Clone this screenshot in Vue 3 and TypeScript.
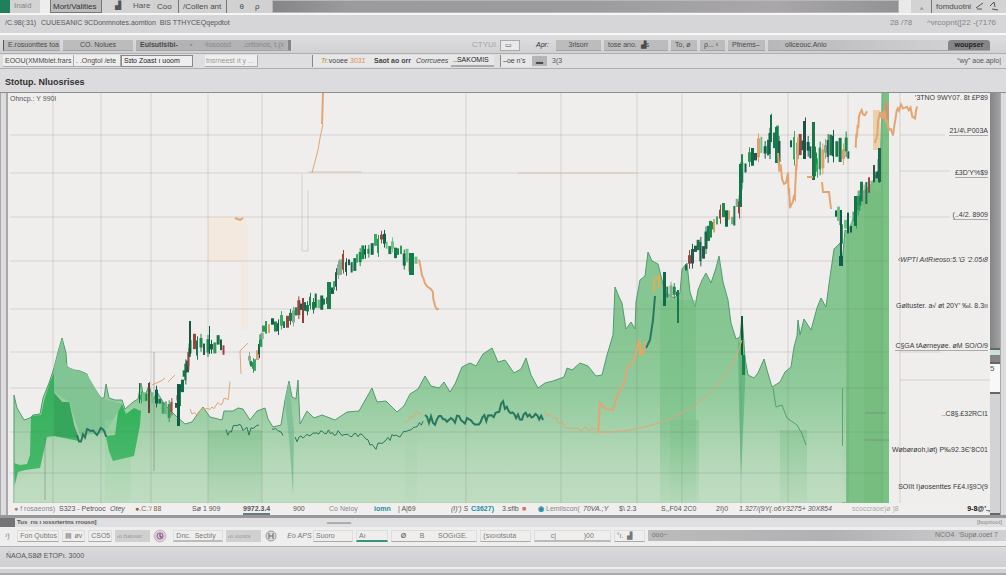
<script setup lang="ts">
type Point = [number, number]
interface Candle { x: number; y: number; h: number; w: number; fill: string }

const xLabels: { text: string; tone?: string }[] = [
  { text: '● f rosaeons)', tone: 'soft' }, { text: 'S323 - Petrooc' }, { text: 'Otey', tone: 'slant' },
  { text: '●.C.’/ 88', tone: 'warm' }, { text: 'Sø 1 909' }, { text: '9972.3.4', tone: 'marked' },
  { text: '900' }, { text: 'Co Neioy', tone: 'soft' }, { text: 'iomn', tone: 'teal' }, { text: '| A|69' },
  { text: '(I)’) S', tone: 'slant' }, { text: 'C3627)', tone: 'teal' }, { text: '3.sflb' }, { text: '■', tone: 'red' },
  { text: '◉', tone: 'teal' }, { text: 'Lemiiscon(', tone: 'soft' }, { text: '70VA.;Y', tone: 'slant' }, { text: '$\\ 2.3' },
  { text: 'S,,F04 2C0' }, { text: '2I)0' }, { text: '1.327/(9Y(.o6Y3275+ 30X854', tone: 'slant' },
  { text: 'scoccraoe)ø )8', tone: 'faint' }, { text: '9-8@’.,', tone: 'bold' },
]

const yLabels: { text: string; tone?: string }[] = [
  { text: '’3TNO 9WY07. 8t £P89' }, { text: '21/4\\.P003A', tone: 'line' }, { text: '£3D’Y%$9', tone: 'line' },
  { text: '(..4/2. 8909', tone: 'line' }, { text: '‹WPTI AıtRıeoso:5.’G ’2.05ı8', tone: 'slant' },
  { text: 'Gøltuster. a√ øt 20Y’ ‰l. 8.3ıı' }, { text: 'C§GA tAørneyøe. øM SO/O/9', tone: 'line' },
  { text: '..C8§.£32RCI1' }, { text: 'Wøbørøoh,iøt) P‰92.3Є’8C01' }, { text: 'SOIIt I)øosenttes F£4.I§9Ͻ(9' },
]

const verticals = [53, 101, 151, 208, 262, 466, 561, 637, 682, 741, 788, 848]
const horizontals = [135, 173, 217, 261, 309, 352, 388, 432, 473]
const stripes = [
  { x: 105, y: 420, w: 26, c: '#8fcf9c' }, { x: 208, y: 430, w: 54, c: '#77bd88' }, { x: 660, y: 300, w: 36, c: '#6fbd7f' },
  { x: 670, y: 420, w: 29, c: '#7cc289' }, { x: 780, y: 430, w: 27, c: '#7cc289' }, { x: 405, y: 420, w: 12, c: '#a3cfaa' },
]

const area = '14,395 17,408 24,420 30,418 33,415 40,414 43,398 49,383 54,368 58,352 62,338 66,353 67,367 74,370 80,371 87,374 90,384 95,389 101,398 104,398 106,384 109,398 115,400 122,400 125,409 133,402 138,399 141,383 144,399 149,385 153,400 157,392 165,405 175,415 185,424 192,422 199,412 203,407 210,417 222,420 224,411 233,411 238,408 243,409 250,420 257,411 265,408 268,419 273,427 281,425 285,400 289,381 292,397 296,399 298,380 300,424 307,411 314,418 322,415 335,420 347,412 359,411 372,388 377,402 386,401 397,412 404,406 410,394 418,389 425,376 431,386 439,388 444,382 450,392 455,384 462,367 470,363 476,366 483,354 492,348 498,362 505,360 514,373 521,369 526,358 531,375 538,388 545,383 553,381 564,377 567,368 572,370 580,363 588,366 596,376 602,375 607,355 613,335 615,287 619,297 622,303 626,329 631,322 635,329 636,302 640,280 645,276 648,252 652,261 658,264 661,276 665,292 674,298 680,293 682,269 687,263 690,292 695,307 698,290 702,280 706,273 711,283 716,268 719,256 723,282 728,300 731,323 736,339 740,337 742,316 745,358 748,375 754,378 758,373 764,359 767,370 772,387 780,382 785,372 791,367 794,347 797,336 798,320 800,335 804,319 811,330 817,308 821,298 826,307 829,284 834,249 840,243 842,264 845,230 850,232 857,207 865,190 872,183 879,169 882,136 882,503 14,503'
const darkLeft = '14,463 20,465 27,464 30,455 31,416 41,415 44,401 50,382 54,373 54,393 62,402 69,402 74,425 79,441 54,436 47,437 40,468 25,470 18,472 15,484'
const darkMid = '106,436 115,435 118,412 122,404 126,414 134,408 141,411 140,425 134,456 113,461 109,451'

/* Small repeatable generator, so the series look the same on every load. */
function generator(seed: number): () => number {
  let s = seed
  return () => {
    s = (s * 16807) % 2147483647
    return s / 2147483647
  }
}

function walk(points: Point[], step: number, visit: (x: number, y: number) => void): void {
  for (let i = 1; i < points.length; i++) {
    const [x0, y0] = points[i - 1]
    const [x1, y1] = points[i]
    const n = Math.max(1, Math.round(Math.hypot(x1 - x0, (y1 - y0) / 3) / step))
    for (let k = 0; k < n; k++) visit(x0 + ((x1 - x0) * k) / n, y0 + ((y1 - y0) * k) / n)
  }
}

const palette = ['#16764a', '#1d8a4d', '#0f5f4b', '#39a862', '#245a4d', '#6fc284', '#15694b', '#9a4640', '#2f9858', '#dda070', '#1b7a4c', '#86aa90']

function candles(points: Point[], seed: number, size: number): Candle[] {
  const rnd = generator(seed)
  const out: Candle[] = []
  walk(points, 3, (x, y) => {
    const h = size * (0.35 + rnd() * 0.9)
    const top = y - h / 2 + (rnd() - 0.5) * size * 0.7
    const fill = palette[Math.floor(rnd() * palette.length)]
    out.push({ x, y: top, h, w: rnd() > 0.4 ? 3 : 2, fill })
    if (rnd() > 0.6) out.push({ x: x + 1, y: top - size * 0.3, h: h + size * 0.6, w: 1, fill })
  })
  return out
}

function jitter(points: Point[], seed: number, size: number): string {
  const rnd = generator(seed)
  const out: string[] = []
  walk(points, 2, (x, y) => out.push(`${x.toFixed(1)},${(y + (rnd() - 0.5) * size).toFixed(1)}`))
  return out.join(' ')
}

const series: Candle[] = [
  ...candles([[140, 398], [148, 394], [155, 401], [165, 405], [173, 411]], 11, 13),
  ...candles([[175, 410], [178, 394], [181, 383], [186, 366], [190, 342], [196, 347], [203, 346], [210, 343], [220, 345], [225, 350]], 23, 14),
  ...candles([[248, 355], [252, 368], [258, 350], [262, 330], [268, 327], [280, 323], [292, 318], [300, 305], [312, 304], [323, 304], [329, 296], [333, 283], [339, 265], [348, 265], [356, 259], [364, 250], [374, 242], [383, 241], [391, 249], [400, 254], [411, 264], [418, 257]], 37, 13),
  ...candles([[663, 290], [676, 296], [680, 296]], 12, 12),
  ...candles([[685, 265], [694, 252], [702, 248], [707, 238], [713, 222], [722, 209], [731, 220], [738, 203], [741, 168], [748, 160], [757, 151], [767, 150], [770, 131], [776, 140], [779, 159]], 51, 17),
  ...candles([[790, 149], [796, 144], [804, 138], [812, 155], [816, 164], [824, 149], [832, 144], [842, 151], [850, 151]], 77, 20),
  ...candles([[835, 211], [841, 231], [850, 225], [855, 213], [860, 194], [868, 189], [873, 178], [880, 168]], 89, 18),
]

const spikes: Candle[] = [
  { x: 177, y: 384, h: 42, w: 3, fill: '#125b42' }, { x: 189, y: 321, h: 33, w: 2, fill: '#115a3c' },
  { x: 209, y: 326, h: 28, w: 1, fill: '#16543f' }, { x: 302, y: 298, h: 25, w: 2, fill: '#933a40' },
  { x: 327, y: 282, h: 27, w: 4, fill: '#16824f' }, { x: 409, y: 253, h: 22, w: 5, fill: '#147a52' },
  { x: 739, y: 164, h: 43, w: 3, fill: '#15734a' }, { x: 770, y: 115, h: 27, w: 2, fill: '#157048' },
  { x: 775, y: 127, h: 36, w: 3, fill: '#167a4c' }, { x: 803, y: 121, h: 38, w: 3, fill: '#1c4e42' },
  { x: 812, y: 122, h: 58, w: 3, fill: '#1c7748' }, { x: 840, y: 210, h: 56, w: 2, fill: '#125b48' },
  { x: 839, y: 256, h: 10, w: 4, fill: '#135d50' }, { x: 854, y: 196, h: 30, w: 3, fill: '#137548' },
  { x: 741, y: 316, h: 39, w: 2, fill: '#0b5b36' }, { x: 742, y: 355, h: 20, w: 3, fill: '#19834c' },
  { x: 663, y: 272, h: 34, w: 3, fill: '#13694c' }, { x: 677, y: 290, h: 33, w: 2, fill: '#19764f' },
  { x: 878, y: 148, h: 34, w: 3, fill: '#1b674b' }, { x: 139, y: 383, h: 20, w: 1, fill: '#17643f' },
  { x: 148, y: 383, h: 30, w: 2, fill: '#5a4a3c' }, { x: 842, y: 388, h: 58, w: 1, fill: '#54a971' },
]

const tealLines = [
  jitter([[77, 441], [87, 434], [97, 430], [108, 436]], 5, 12),
  jitter([[226, 434], [235, 427], [247, 431], [261, 429]], 6, 9),
  jitter([[272, 434], [279, 431], [285, 434]], 16, 10),
  jitter([[295, 440], [315, 432], [340, 433], [360, 435], [376, 447], [390, 438], [410, 431], [425, 420]], 7, 6),
  jitter([[425, 420], [455, 420], [475, 422], [490, 416], [503, 404], [518, 415], [545, 420]], 9, 10),
]
const orangeLines = [
  '323,124 320,138 318,150 312,173',
  jitter([[190, 413], [208, 411], [218, 404], [228, 397], [230, 383], [232, 381]], 43, 8),
  jitter([[405, 425], [416, 413], [424, 412]], 48, 6),
  jitter([[545, 414], [558, 420], [570, 429], [590, 428], [598, 433]], 44, 5),
  '241,374 240,351 248,343', '152,385 161,381 165,378', '168,382 175,375',
]
const orangeStrong = [
  '323,93 322,124', '235,218 240,220 243,218',
  jitter([[419, 263], [425, 281], [432, 288], [435, 309], [441, 312]], 41, 7),
  '598,433 600,403 606,409 613,410 618,394 624,384 627,368 634,361 639,340 642,356 646,342',
  jitter([[778, 160], [782, 177], [788, 178], [790, 210], [795, 194], [797, 155], [799, 137]], 45, 14),
  '807,177 813,177', '822,182 823,192 829,192 831,209',
  jitter([[855, 153], [859, 119], [863, 110], [869, 113]], 49, 14),
  jitter([[875, 150], [879, 120], [882, 108], [887, 127], [893, 130], [899, 109], [907, 103], [914, 117], [918, 97]], 47, 14),
]
</script>

<template>
  <main class="window">
    <header class="tabs">
      <span class="brand"></span><span>Inaid</span>
      <button class="tab raised">Mort/Valities</button><span class="center">▟</span><span>Hare</span>
      <button class="tab">Coo</button><button class="tab edged">/Collen ant</button>
      <button class="tab edged center">θ &nbsp; &nbsp; ρ</button>
      <span class="strip"></span><span class="gap"></span>
      <span class="center">‸</span><button class="tab edged">fomduotni</button>
      <svg class="marks" viewBox="0 0 24 10"><path d="M1 7 L8 2 M2 8 L7 8 M15 5 L19 1 L20 6 M17 8 L23 9" /></svg>
    </header>

    <div class="address">
      <span>/C.98(:31)</span><span class="path">CUUESANIC 9CDonmnotes.aomtion &nbsp;BIS TTHYCEQqepdtot</span>
      <span class="dim">28 /78</span><span class="dim">^vrcopnt([22 -(7176</span>
    </div>

    <nav class="tools" aria-label="Tools">
      <button class="strong">E.rosuonttes toa</button><button>CO. Nolues</button>
      <button class="wide"><b>Eulsutlsibi-</b><span>▪</span><span>‹losoosd</span><span>.orttonos, t.(x</span></button>
      <span></span><span class="pale">CTYUI</span><button class="key">▭</button><span class="ink">Apr:</span>
      <button class="middle">3rlsorr</button><button>tose ano. &nbsp;▟s</button><button>To, ø</button><button>ρ... ‹</button><button>Pfnems–</button>
      <button class="long">ollceouc.Anio</button><button class="dark">woupser</button>
    </nav>

    <nav class="subtools" aria-label="Views">
      <button class="light">EOOU(XMMblet.frars</button><button class="light">. .Ongtol /ete</button><button class="light framed">Sɪto Zoast ı uoom</button>
      <button class="light grey">tnsrneest ıt y ...</button><span></span>
      <button class="plain edge"><i class="gold">Tr.</i>vooee <i class="orange">3031</i></button>
      <button class="plain bold">Saot ao orr</button><button class="plain slant">Corrcuees</button>
      <button class="plain under">..SAKOMIS</button><button class="plain edge">–oe n’s</button>
      <button class="chip">▬</button><span>3(3</span><span class="far">“wy” aoe.aplo|</span>
    </nav>

    <h1>Stotup. Nluosrises</h1>

    <section class="stage">
      <aside class="rail"></aside>
      <div class="board">
        <svg class="plot" viewBox="8 93 982 410" preserveAspectRatio="none" role="img" aria-label="Price and volume chart">
          <defs>
            <linearGradient id="fade" gradientUnits="userSpaceOnUse" x1="0" y1="330" x2="0" y2="503">
              <stop offset="0" stop-color="#86c692" /><stop offset=".35" stop-color="#91cb9c" />
              <stop offset=".62" stop-color="#a8d3ae" /><stop offset="1" stop-color="#bfdcc1" />
            </linearGradient>
            <linearGradient id="vivid" x1="0" y1="0" x2="0" y2="1"><stop offset="0" stop-color="#32b15a" /><stop offset="1" stop-color="#48b86a" /></linearGradient>
            <linearGradient id="veil" x1="0" y1="0" x2="0" y2="1"><stop offset="0" stop-color="#b7dbbb" stop-opacity="0" /><stop offset="1" stop-color="#bfdcc1" stop-opacity=".8" /></linearGradient>
          </defs>
          <rect x="208" y="217" width="38" height="45" fill="#f3e9de" />
          <rect x="241" y="225" width="7" height="105" fill="#f4e9e1" />
          <polygon :points="area" fill="url(#fade)" stroke="#529a72" stroke-width="1" />
          <polygon points="54,368 62,338 67,367 87,374 101,398 122,404 106,432 80,436 69,402 54,392" fill="#82c594" />
          <rect v-for="s in stripes" :key="s.x" :x="s.x" :y="s.y" :width="s.w" :height="503 - s.y" :fill="s.c" opacity=".5" />
          <polygon points="14,485 40,466 47,438 107,441 112,461 135,456 143,440 205,438 262,440 300,450 600,432 842,432 842,503 14,503" fill="url(#veil)" />
          <polygon :points="darkLeft" fill="url(#vivid)" />
          <polygon points="54,393 62,402 69,402 74,425 79,438 54,436" fill="#35a65b" />
          <polygon :points="darkMid" fill="url(#vivid)" />
          <polyline points="773,388 776,407 782,405 787,418 797,425 802,434 806,445" fill="none" stroke="#50a372" />
          <polygon points="285,400 289,381 294,430 293,495 290,450" fill="#83c298" />
          <polygon points="738,339 746,358 744,410 741,477 739,404" fill="#56b276" opacity=".7" />
          <polygon points="846,235 857,207 865,190 872,183 879,169 882,93 889,93 889,503 846,503" fill="#7bc084" />
          <rect x="864" y="190" width="18" height="313" fill="#72b97c" opacity=".55" />
          <rect x="884" y="103" width="5" height="17" fill="#c39a76" />
          <rect x="873" y="110" width="7" height="40" fill="#ecd0ad" />
          <path d="M882 93V503" stroke="#6ab076" />
          <path v-for="x in verticals" :key="'v' + x" :d="`M${x} 93V503`" class="grid" />
          <path v-for="y in horizontals" :key="'h' + y" :d="`M10 ${y}H889`" class="grid" />
          <path d="M302 174V251H308V190 M900 93V503 M900 380H990 M900 135H945 M900 171H950 M900 217H950 M900 352H940" class="grid" />
          <path d="M518 173H637 M308 172H362" stroke="#d6c4b4" />
          <path d="M154 352V471 M45 438V500 M865 440H889 M865 413H886" class="grid strong" />
          <rect v-for="(c, i) in series" :key="'c' + i" :x="c.x" :y="c.y" :width="c.w" :height="c.h" :fill="c.fill" />
          <rect v-for="(c, i) in spikes" :key="'s' + i" :x="c.x" :y="c.y" :width="c.w" :height="c.h" :fill="c.fill" />
          <polyline points="646,348 650,340 653,320 655,296" class="teal heavy" />
          <polyline v-for="(l, i) in tealLines" :key="'t' + i" :points="l" class="teal" :class="{ heavy: i === 0 || i === 4 }" />
          <polyline v-for="(l, i) in orangeLines" :key="'o' + i" :points="l" class="orange-line" />
          <polyline v-for="(l, i) in orangeStrong" :key="'p' + i" :points="l" class="orange-line heavy" />
          <path d="M597 432 C645 434 720 413 742 340" class="orange-line" />
          <path d="M654 292V280L659 276V288 M640 355V343" fill="none" stroke="#dfad54" stroke-width="2" />
        </svg>
        <span class="caption">Ohncp.: Y 990l</span>
        <ol class="prices">
          <li v-for="l in yLabels" :key="l.text" :class="l.tone">{{ l.text }}</li>
        </ol>
        <ol class="dates">
          <li v-for="l in xLabels" :key="l.text" :class="l.tone">{{ l.text }}</li>
        </ol>
      </div>
      <aside class="scroll"><i class="thumb"></i><i class="step"></i><i class="white">5</i><i class="rest"></i></aside>
      <aside class="outer"></aside>
    </section>

    <footer>
      <div class="status"><span class="corner"></span><b>Tus &nbsp;rıs ı ıossrtertns rrousn]</b><span class="quiet">▬▬▬▬</span><span class="tail">[bopıtoot]</span></div>
      <div class="dock">
        <span>›)</span><button class="cell">Fon Qubtos</button><button class="cell">▤ øv</button><button class="cell">CSO5</button>
        <button class="cell shade">‹o bøossr</button>
        <svg viewBox="0 0 14 14" class="badge"><circle cx="7" cy="7" r="6" fill="#dacbd9" stroke="#c4b8c4" /><circle cx="7" cy="7" r="3" fill="none" stroke="#a65688" stroke-width="1" /><path d="M7 5v3h2" stroke="#46434c" /></svg>
        <button class="cell line">Dnc. &nbsp;Sectıly</button><button class="cell shade">‹o ıoosts</button>
        <svg viewBox="0 0 14 14" class="badge"><circle cx="7" cy="7" r="5" fill="#dddcdc" stroke="#9b9999" stroke-width="1" /><path d="M5 4v6M5 7h4M9 4v6" stroke="#666" stroke-width="1" /></svg>
        <span class="slant">Eo APS</span><button class="cell">Suoro</button><button class="cell green">Aı</button>
        <button class="cell pair"><b>Ø</b><span>B</span><span>SOGıGE.</span></button><button class="cell">(sıoıotsuta</button>
        <button class="cell pair line"><span>c|</span><span>)00</span></button><button class="cell">°ı. &nbsp;▟</button>
        <div class="track"><span>ooo~</span><span>NCO4 &nbsp;‘Supø.ooet 7</span></div>
      </div>
      <p class="message">ŃAOA,S8Ø ETOPı. 3000</p>
      <div class="base"></div>
    </footer>
  </main>
</template>

<style>
html, body { margin: 0; background: #d8d7da; }
</style>

<style scoped>
* { box-sizing: border-box; }
.window { display: flex; flex-direction: column; min-height: 100vh; overflow: hidden; background: #dcdbde; color: #555557; font: 8px/10px "Liberation Sans", Arial, sans-serif; white-space: nowrap; }
.window > * { flex: none; }
button { min-width: 0; margin: 0; padding: 0 4px; border: 0; overflow: hidden; background: #bdbcbd; color: #4a4a4a; font: inherit; text-align: left; white-space: nowrap; }
span { min-width: 0; }
.center { text-align: center; }
.slant { font-style: italic; }
.tabs { display: grid; grid-template-columns: 14fr 36fr 52fr 31fr 20fr 25fr 48fr 46fr 627fr 12fr 20fr 44fr 31fr; height: 13px; line-height: 12px; background: #d3d3d3; }
.brand { width: 10px; background: #20805b; }
.tabs span:nth-child(2) { border-right: 10px solid #eeedec; color: #888; }
.tab { background: #d2d1d1; }
.tab.raised { border: 1px solid #777; border-top: 0; padding: 0 2px; background: #bcbbbc; line-height: 11px; color: #333; }
.tab.edged { border-left: 1px solid #777; }
.strip { border: 1px solid #b8b7b8; background: linear-gradient(90deg, #858488, #9b9a9c 12%, #9c9b9d 50%, #a9a7a9 80%, #929193); }
.gap { background: #eae9e9; }
.marks { width: 24px; height: 12px; fill: none; stroke: #555; stroke-width: 1; }
.address { display: grid; grid-template-columns: 36fr 848fr 37fr 79fr; height: 22px; padding-left: 5px; border-top: 2px solid #f5f5f5; border-bottom: 2px solid #f8f8f8; background: #d6d5d8; line-height: 16px; font-size: 7px; }
.address .dim { color: #858588; font-size: 8px; }
.tools { display: grid; grid-template-columns: 60fr 73fr 155fr 181fr 28fr 36fr 20fr 48fr 67fr 29fr 28fr 40fr 180fr 54fr; align-items: center; height: 18px; padding: 4px 4px 2px 3px; background: linear-gradient(#dedddf, #d1d0d3); font-size: 7px; }
.tools button { height: 11px; margin-right: 3px; border-bottom: 1px solid #a4a3a5; }
.tools .strong { border-left: 1px solid #555; }
.tools .wide { display: flex; justify-content: space-between; margin-right: 0; border-right: 3px solid #858486; background: #b3b2b4; }
.tools .wide span { color: #88878a; }
.tools .pale { color: #a5a4a7; font-size: 8px; }
.tools .ink { color: #333; font-style: italic; }
.tools .key { margin-right: 16px; border: 1px solid #a9a9a9; background: #e9e9e9; line-height: 8px; }
.tools .middle, .tools button:nth-child(2) { text-align: center; }
.tools .long { margin-right: 0; padding-left: 17px; background: linear-gradient(90deg, #b7b6b8, #d1d0d2); }
.tools .dark { margin-right: 12px; border-radius: 3px 3px 0 0; background: #858487; color: #222; font-weight: bold; text-align: center; }
.subtools { display: grid; grid-template-columns: 71fr 47fr 72fr 65fr 54fr 60fr 42fr 37fr 49fr 32fr 20fr 395fr 54fr; align-items: center; height: 16px; padding: 0 5px 0 3px; border-top: 1px solid #aeadb0; border-bottom: 1px solid #aeadb0; background: #dedde0; font-size: 7px; }
.subtools .light { height: 12px; border-right: 1px solid #aaa; border-bottom: 1px solid #aaa; padding: 0 2px; background: #efeeee; }
.subtools .framed { border: 1px solid #888; color: #222; }
.subtools .grey { margin-left: 12px; padding: 0 1px; color: #999; }
.subtools .plain { height: 12px; padding: 0 2px; background: #e8e7e8; color: #444; }
.subtools .bold { font-weight: bold; }
.subtools .slant { font-style: italic; }
.subtools .under { margin-right: 6px; border-bottom: 2px solid #aaa; color: #222; }
.subtools .edge { border-left: 1px solid #888; }
.subtools .edge:has(.gold) { padding-left: 8px; }
.subtools .chip { height: 10px; margin-right: 5px; background: #b5b4b6; line-height: 9px; }
.gold { color: #bb8b23; }
.orange { color: #db8b52; }
.far { text-align: right; }
h1 { height: 24px; margin: 0; padding-left: 5px; border-bottom: 1px solid #8f8e91; background: #dcdbde; color: #303032; font-size: 9px; line-height: 26px; }
.window > .stage { display: grid; flex: 1 0 400px; grid-template-columns: 8px minmax(0, 1fr) 10px 6px; background: #f0eeec; }
.rail { border-right: 2px solid #aaa8aa; border-left: 1px solid #aaa; background: #dddcdf; }
.board { display: grid; grid-template-columns: 892fr 90fr; grid-template-rows: minmax(0, 1fr) 12px; min-width: 0; }
.plot { grid-area: 1 / 1 / 2 / 3; width: 100%; height: 100%; min-height: 0; }
.grid { fill: none; stroke: #777578; stroke-width: 1; opacity: .24; }
.grid.strong { opacity: .5; }
.teal { fill: none; stroke: #28785f; stroke-width: 1; }
.orange-line { fill: none; stroke: #e3a574; stroke-width: 1; }
.teal.heavy, .orange-line.heavy { stroke-width: 2; }
.caption { z-index: 1; grid-area: 1 / 1; align-self: start; padding: 1px 2px; font-size: 7px; }
ol { margin: 0; padding: 0; list-style: none; }
.prices { z-index: 1; display: grid; grid-area: 1 / 2; grid-template-rows: 9fr 34fr 42fr 42fr 44fr 46fr 41fr 67fr 36fr 37fr 12fr; justify-items: end; align-items: end; padding-right: 2px; color: #38373b; font-size: 7px; line-height: 8px; }
.prices li { min-height: 0; }
.prices .line { border-bottom: 1px solid #aaa8aa; }
.dates { display: grid; grid-area: 2 / 1 / 3 / 3; grid-template-columns: 45fr 51fr 25fr 57fr 51fr 50fr 36fr 45fr 24fr 53fr 20fr 31fr 20fr 16fr 8fr 37fr 36fr 42fr 55fr 23fr 113fr 125fr 13fr; padding: 1px 0 0 6px; background: #f0efed; font-size: 7px; line-height: 9px; }
.dates li { min-width: 0; }
.dates .soft { color: #88878a; }
.dates .faint { color: #aaa8aa; }
.dates .warm { color: #82604c; }
.dates .teal { color: #258da3; stroke: none; font-weight: bold; }
.dates .red { color: #d46e69; }
.dates .marked { justify-self: start; border-bottom: 2px solid #68797f; font-weight: bold; }
.dates .bold { justify-self: end; color: #111; font-weight: bold; }
.scroll { display: grid; grid-template-rows: 257fr 14fr 30fr 121fr; background: #b9b8bb; }
.scroll i { border-bottom: 2px solid #666; font-style: normal; }
.thumb { background: linear-gradient(90deg, #858487, #a1a0a3); }
.step { background: linear-gradient(#cce1d5 40%, #848386 40%); }
.white { background: #f8f8f8; }
.rest { background: #d3d2d5; }
.outer { border-left: 1px solid #aaa; background: #dddcdd; }
.status { display: grid; grid-template-columns: 17fr 310fr 650fr 29fr; height: 12px; border-top: 3px solid #98979a; background: #dfdee0; font-size: 6px; line-height: 9px; }
.corner { width: 15px; background: #747477; }
.quiet { color: #aaa; }
.tail { color: #888; }
.dock { display: grid; grid-template-columns: 12fr 44fr 25fr 26fr 37fr 20fr 51fr 37fr 23fr 25fr 42fr 34fr 87fr 52fr 78fr 33fr 349fr; align-items: center; height: 19px; padding: 0 0 2px 5px; background: #efeeee; color: #777; font-size: 7px; }
.cell { height: 12px; margin-right: 3px; padding: 0 2px; border: 1px solid #ddd; border-bottom-color: #aaa; background: #efeeed; color: #777; line-height: 10px; }
.shade { border: 0; background: #d1d0d1; color: #999; font-size: 6px; }
.line { border-bottom: 2px solid #bbb; }
.green { border-bottom: 2px solid #39937b; }
.pair { display: flex; justify-content: space-around; }
.badge { width: 14px; height: 14px; fill: none; }
.track { display: flex; justify-content: space-between; height: 11px; padding: 0 8px 0 4px; background: linear-gradient(90deg, #bcbbbc, #b1b0b2 50%, #d1d0d2); }
.message { height: 21px; margin: 0; padding-left: 6px; border-top: 1px solid #b5b4b7; background: linear-gradient(#dad9dc, #cfced2); color: #555; font-size: 7px; line-height: 17px; }
.base { height: 8px; border-top: 2px solid #eee; border-bottom: 2px solid #aaa9ac; background: #d3d2d5; }
</style>
